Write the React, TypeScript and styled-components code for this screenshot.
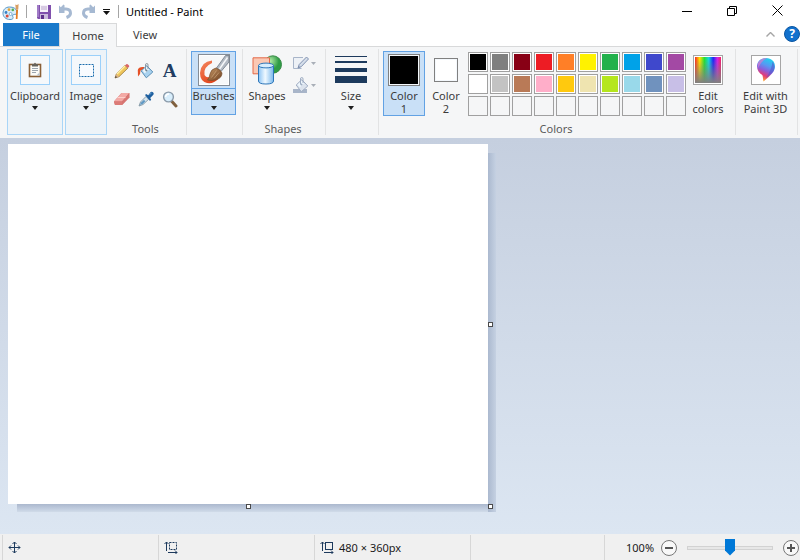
import React, { useState } from "react";
import styled, { createGlobalStyle, css } from "styled-components";

const GlobalStyle = createGlobalStyle`
  * { box-sizing: border-box; }
  body { margin: 0; background: #fff; }
  body, button, input { font-family: "Noto Sans", "Open Sans", sans-serif; font-size: 11px; color: #3b3b3b; }
  button { border: 0; padding: 0; background: none; cursor: default; }
  svg { display: block; flex: none; }
`;

const Window = styled.div`
  display: flex;
  flex-direction: column;
  min-height: 100vh;
  overflow: hidden;
`;

const TitleBar = styled.header`
  display: flex;
  align-items: center;
  height: 23px;
  padding-left: 2px;
`;

const QuickAccess = styled.div`
  display: flex;
  align-items: center;
`;

const Divider = styled.span`
  width: 1px;
  height: 13px;
  margin: 0 9px 0 6px;
  background: #a5a5a5;
`;

const IconButton = styled.button<{ $width: number; $height?: number; $gap?: number }>`
  display: flex;
  align-items: center;
  justify-content: center;
  gap: ${(p) => p.$gap ?? 0}px;
  width: ${(p) => p.$width}px;
  height: ${(p) => p.$height ?? 22}px;
`;

const Title = styled.h1`
  margin: 0 0 0 1px;
  padding-left: 7px;
  border-left: 1px solid #a5a5a5;
  font-size: 11px;
  font-weight: 400;
  line-height: 13px;
  color: #000;
  white-space: nowrap;
`;

const WindowButtons = styled.div`
  display: flex;
  margin-left: auto;
`;

const TabBar = styled.nav`
  display: flex;
  height: 24px;
  padding-left: 3px;
  border-bottom: 1px solid #d8d9da;
`;

const Tab = styled.button<{ $kind: "file" | "active" | "plain" }>`
  width: 56px;
  height: 23px;
  ${(p) => p.$kind === "file" && css`background: #1979ca; color: #fff;`}
  ${(p) => p.$kind === "active" && css`
    width: 58px;
    height: 24px;
    border: 1px solid #d8d9da;
    border-bottom: 0;
    background: #f5f6f7;
  `}
`;

const TabTools = styled.div`
  display: flex;
  align-items: center;
  margin-left: auto;
`;

const Ribbon = styled.section`
  display: flex;
  height: 91px;
  padding: 2px 0 3px 7px;
  background: #f5f6f7;
`;

const Collapsed = styled.div<{ $width: number }>`
  display: flex;
  justify-content: center;
  align-items: flex-start;
  flex: none;
  width: ${(p) => p.$width}px;
  padding-top: 1px;
  margin-right: 2px;
  border: 1px solid #a9d5f7;
  background: #edf3f8;
  &:nth-child(2) { margin-right: 0; }
`;

const GroupFrame = styled.div<{ $width: number }>`
  display: flex;
  flex-direction: column;
  flex: none;
  width: ${(p) => p.$width}px;
  padding: 2px 2px 0 0;
  border-right: 1px solid #e2e3e4;
`;

const GroupBody = styled.div`
  display: flex;
  justify-content: center;
  flex: 1;
  align-items: flex-start;
`;

const GroupLabel = styled.div`
  height: 13px;
  line-height: 13px;
  text-align: center;
  color: #5a5a5a;
`;

const BigButton = styled.button<{ $width: number; $selected?: boolean }>`
  display: flex;
  flex-direction: column;
  align-items: center;
  flex: none;
  width: ${(p) => p.$width}px;
  border: 1px solid ${(p) => (p.$selected ? "#62a2e4" : "transparent")};
  background: ${(p) => (p.$selected ? "#c9e0f7" : "transparent")};
`;

const IconArea = styled.span<{ $split?: boolean }>`
  display: flex;
  align-items: center;
  justify-content: center;
  align-self: stretch;
  height: 37px;
  border-bottom: 1px solid ${(p) => (p.$split ? "#62a2e4" : "transparent")};
`;

const Caption = styled.span`
  display: block;
  line-height: 13px;
  text-align: center;
  white-space: nowrap;
`;

const IconTile = styled.span`
  display: flex;
  align-items: center;
  justify-content: center;
  width: 30px;
  height: 30px;
  border: 1px solid #9bd0fa;
  background: #f5f8fb;
`;

const FramedTile = styled(IconTile)`
  border-color: #a6a6a6;
  background: #fff;
`;

const ArrowSlot = styled.span`
  display: flex;
  align-items: center;
  justify-content: center;
  height: 12px;
  color: #1f1f1f;
`;

const ToolGrid = styled.div`
  display: grid;
  grid-template-columns: repeat(3, 24px);
  padding-top: 6px;
`;

const ShapeOptions = styled.div`
  display: grid;
  padding: 1px 4px 0 0;
`;

const Swatch = styled.span<{ $color: string; $size: number }>`
  width: ${(p) => p.$size}px;
  height: ${(p) => p.$size}px;
  border: 1px solid #808080;
  padding: 1px;
  background: linear-gradient(${(p) => p.$color}, ${(p) => p.$color}) content-box, #f4f8fc;
`;

const Palette = styled.div`
  display: grid;
  grid-template-columns: repeat(10, 20px);
  grid-auto-rows: 20px;
  gap: 2px;
  padding-top: 1px;
  margin: 0 1px;
`;

const PaletteCell = styled.button<{ $color?: string }>`
  border: 1px solid #a0a0a0;
  padding: 1px;
  background: ${(p) => (p.$color ? `linear-gradient(${p.$color}, ${p.$color}) content-box, #fff` : "#f5f6f7")};
`;

const Workspace = styled.main`
  flex: 1;
  padding: 6px 8px 30px;
  background: linear-gradient(#c5cfdf, #dce6f2);
`;

const CanvasHolder = styled.div`
  position: relative;
  width: max-content;
  &::before, &::after { content: ""; position: absolute; }
  &::before {
    left: 100%;
    top: 9px;
    bottom: -8px;
    width: 8px;
    background: linear-gradient(90deg, #abb9cf, #c5d1e2);
  }
  &::after {
    top: 100%;
    left: 9px;
    right: 0;
    height: 8px;
    background: linear-gradient(#abb8ce, #d0dbe9);
  }
`;

const Paper = styled.canvas`
  display: block;
  background: #fff;
`;

const Handle = styled.span<{ $at: "right" | "bottom" | "corner" }>`
  position: absolute;
  z-index: 1;
  width: 5px;
  height: 5px;
  border: 1px solid #4b4b4b;
  background: #fff;
  left: ${(p) => (p.$at === "bottom" ? "calc(50% - 2px)" : "100%")};
  top: ${(p) => (p.$at === "right" ? "calc(50% - 2px)" : "100%")};
`;

const StatusBar = styled.footer`
  display: flex;
  height: 26px;
  padding: 1px 0 0 2px;
  background: #f0f0f0;
  color: #1a1a1a;
`;

const StatusCell = styled.div<{ $grow?: boolean }>`
  display: flex;
  align-items: center;
  gap: 5px;
  flex: ${(p) => (p.$grow ? "1 0 134px" : "none")};
  width: 156px;
  padding-left: 5px;
  border-left: 1px solid #d7d7d7;
  white-space: nowrap;
`;

const ZoomCell = styled.div`
  display: flex;
  align-items: center;
  border-left: 1px solid #d7d7d7;
  padding-left: 21px;
`;

const ZoomValue = styled.output`
  width: 34px;
`;

const ZoomSlider = styled.input`
  appearance: none;
  width: 86px;
  height: 18px;
  margin: 0 9px;
  background: transparent;
  &::-webkit-slider-runnable-track {
    height: 4px;
    border: 1px solid #d2d2d2;
    background: #e7e7e7;
  }
  &::-webkit-slider-thumb {
    appearance: none;
    width: 10px;
    height: 17px;
    margin-top: -8px;
    background: #0078d7;
    clip-path: polygon(0 0, 100% 0, 100% 70%, 50% 100%, 0 70%);
  }
`;

const Arrow = () => (
  <ArrowSlot><svg width="6" height="4" viewBox="0 0 6 4"><path d="M0 0h6L3 4z" fill="currentColor" /></svg></ArrowSlot>
);

const PaletteIcon = () => (
  <svg width="18" height="18" viewBox="0 0 18 18">
    <path d="M7.5 4C3.400 4 1 6.800 1 10.200 1 13.800 3.800 16.500 8 16.500c3 0 3.600-1.400 2.800-2.800-.7-1.400.2-2.300 1.900-2.300 2.200 0 2.800-1.300 2.200-3.100C14.200 5.500 11.300 4 7.500 4z" fill="#d9edfa" stroke="#5795c4" />
    <circle cx="4" cy="9.500" r="1.400" fill="#3b82c4" /><circle cx="7" cy="6.700" r="1.400" fill="#e6a437" />
    <circle cx="10.800" cy="6.900" r="1.300" fill="#54af51" /><circle cx="5.200" cy="13" r="1.500" fill="#dc4a38" />
    <circle cx="8.600" cy="11" r="1.500" fill="#fff" stroke="#5795c4" strokeWidth=".7" />
    <path d="M14.200 6.500 13.800 16h1.700L16 6.500z" fill="#e47b21" /><path d="M13.300 1.500q1.500 1 3.300-.5l-.3 5.500h-2.500z" fill="#d89d61" />
  </svg>
);

const SaveIcon = () => (
  <svg width="14" height="14" viewBox="0 0 14 14">
    <path d="M0 0h14v14H1l-1-1z" fill="#8051ad" /><path d="M3 0h8v7H3z" fill="#f6f2fa" />
    <path d="M4 2h6M4 4h6" stroke="#b8a4cb" /><path d="M3 9h8v5H3z" fill="#cbbcdc" /><path d="M4 10h3v4H4z" fill="#5c318a" /><path d="M0 0h2v12H0z" fill="#a07bc6" />
  </svg>
);

const UndoIcon = ({ flip = false }: { flip?: boolean }) => (
  <svg width="14" height="15" viewBox="0 0 14 15">
    <g transform={flip ? "translate(14 0) scale(-1 1)" : undefined}>
      <path d="M3 5h4q4.500.2 4.500 4.200 0 2.800-4 4.300" fill="none" stroke="#a6b9d2" strokeWidth="3" />
      <path d="M0 1.500 1.800 3.200 4.500.5l1 .8v7.700H0z" fill="#a6b9d2" />
    </g>
  </svg>
);

const ClipboardIcon = () => (
  <svg width="14" height="16" viewBox="0 0 14 16">
    <rect x="1.500" y="2.500" width="11" height="12" fill="#fbfbf8" stroke="#8a5f36" strokeWidth="1.600" />
    <path d="M4 6.500h6M4 8.500h6M4 10.500h4" stroke="#9ba5b0" />
    <path d="M4 4.500V2h2q1-2.600 2 0h2v2.500z" fill="#66625b" /><path d="M11.500 10.500v3h-3z" fill="#b4c0cb" />
  </svg>
);

const SelectIcon = () => (
  <svg width="15" height="13" viewBox="0 0 15 13"><rect x=".5" y=".5" width="14" height="12" fill="#f8fbff" stroke="#1b6cad" strokeDasharray="2 1" /></svg>
);

const PencilIcon = () => (
  <svg width="16" height="16" viewBox="0 0 16 16">
    <path d="m1 15 1.300-4L11 2.400l2.900 2.700L5 13.700z" fill="#efc65c" stroke="#987636" strokeWidth=".8" />
    <path d="m3 11 8-8" stroke="#fff0a7" strokeWidth="1.200" /><path d="m1 15 1.300-4 2.600 2.700z" fill="#d8b28c" /><path d="m1 15 .7-2 1.300 1.200z" fill="#343434" />
    <path d="m11 2.400 1.300-1.200q.7-.5 1.400.1l1.300 1.300q.6.700-.1 1.300l-1 1.200z" fill="#d96668" />
  </svg>
);

const FillIcon = ({ muted = false }: { muted?: boolean }) => (
  <svg width="17" height="17" viewBox="0 0 17 17">
    {muted ? <path d="M1 12h14v4H1z" fill="#a8b5c9" /> : <path d="M7 4Q1.500 3.500.8 7l.2 6.500 2-2.500.5-3.500L7 6z" fill="#e65126" />}
    <path d="m4.200 8 5.600-5.300 6 6.300-6.500 5.800z" fill={muted ? "#dce3ed" : "#a9d2ef"} stroke={muted ? "#9eacc2" : "#5d91b7"} />
    <path d="m5.500 7.600 4.200-3.800 2.400 2.700-4.300 3.800z" fill="#eef7fd" />
    <path d="M8.500 7.500V2q0-1.500 1.300-1.500T11 2v4" fill="none" stroke={muted ? "#9eacc2" : "#8a96a0"} />
    <circle cx="9.500" cy="7.500" r="1" fill={muted ? "#9eacc2" : "#668092"} />
  </svg>
);

const TextIcon = () => (
  <svg width="17" height="17" viewBox="0 0 17 17"><text x="8.500" y="14" textAnchor="middle" fontFamily="Liberation Serif, serif" fontSize="19" fontWeight="700" fill="#203c62">A</text></svg>
);

const EraserIcon = () => (
  <svg width="17" height="16" viewBox="0 0 17 16">
    <path d="M1 10.500 8.500 2h7.800v4.500L9 14H2z" fill="#ce6967" /><path d="M1 10.500 8.500 2h7.800L9 10.500z" fill="#f3aaa6" />
    <path d="m9 10.500 7.300-8.500v4.500L9 14z" fill="#d77572" /><path d="M1 10.500h8V14H2z" fill="#dc7b77" /><path d="m4.500 6.500 8 .1" stroke="#ffd3ce" />
  </svg>
);

const PickerIcon = () => (
  <svg width="16" height="16" viewBox="0 0 16 16">
    <path d="m1 15 1.500-4L8 5.500l2.700 2.700L5 13.500z" fill="#d6e5ef" stroke="#738b9b" strokeWidth=".8" /><path d="m2 14 1-2.600 3-2.600 1.300 1.400L5 12.800z" fill="#5f98c4" />
    <path d="m7 4 1.200-1 2 1.300L12.700 1q1.500-.8 2.700.8.800 1.400-.5 2.500L12.200 7l1 1.700L12 10z" fill="#1e5f9f" /><path d="m11.500 3.600 2-1.600" stroke="#6ba6d7" />
  </svg>
);

const MagnifierIcon = () => (
  <svg width="16" height="17" viewBox="0 0 16 17">
    <path d="m9.500 10 4.500 5" stroke="#80603e" strokeWidth="3" strokeLinecap="round" /><circle cx="6.500" cy="6" r="4.900" fill="#d8eefc" stroke="#8b9baa" strokeWidth="1.400" />
    <path d="M3.500 6Q4 3 7 3" fill="none" stroke="#fff" strokeWidth="1.500" />
  </svg>
);

const BrushIcon = () => (
  <svg width="32" height="32" viewBox="0 0 32 32">
    <defs>
      <linearGradient id="bristle" x2="1" y2="1"><stop stopColor="#c89a68" /><stop offset="1" stopColor="#6e4020" /></linearGradient>
      <linearGradient id="paint" x2=".6" y2="1"><stop stopColor="#f58a62" /><stop offset="1" stopColor="#e2451c" /></linearGradient>
    </defs>
    <rect x=".5" y=".5" width="31" height="31" fill="#fff" stroke="#858d97" /><path d="M2 2h28v28H2z" fill="#f7f8f9" />
    <path d="M14 6.500Q3 7.500 2 19q0 8 7 10 7 1 11-4l-7-3q-4 3-6.500-1-1.500-8 7.500-12z" fill="url(#paint)" />
    <path d="m18.500 14 9-12.500H31V8l-8 9.500z" fill="#b3bac3" stroke="#6f7984" strokeWidth=".8" /><path d="m21.500 15 8-11.500" stroke="#f5f7f9" strokeWidth="1.500" />
    <path d="M9.500 26q2-2 2.500-6 1-5 6-6 4.500 1.500 6 5 0 4.500-5 6.500-5 1.800-9.500.5z" fill="url(#bristle)" stroke="#794e2d" strokeWidth=".7" /><path d="m13.500 23.500 5-7m-2.500 8 5-6" stroke="#d6b084" strokeWidth=".6" />
  </svg>
);

const ShapesIcon = () => (
  <svg width="30" height="30" viewBox="0 0 30 30">
    <defs>
      <radialGradient id="ball" cx=".35" cy=".3"><stop stopColor="#b4eba8" /><stop offset="1" stopColor="#2e9c45" /></radialGradient>
      <linearGradient id="tube"><stop stopColor="#8dc4f4" /><stop offset=".45" stopColor="#f0f9ff" /><stop offset="1" stopColor="#7ab8ec" /></linearGradient>
    </defs>
    <circle cx="20.800" cy="9.500" r="8.700" fill="url(#ball)" stroke="#398a48" />
    <path d="M1 2.800h16.500v16H1z" fill="#fac8b4" stroke="#e46a48" />
    <path d="M6.500 10.500v15.500q0 3 7.500 3t7.500-3V10.500z" fill="url(#tube)" stroke="#2d76b9" /><ellipse cx="14" cy="10.500" rx="7.500" ry="2.400" fill="#d6ecfd" stroke="#2d76b9" />
  </svg>
);

const OutlineIcon = () => (
  <svg width="16" height="14" viewBox="0 0 16 14">
    <path d="M10 1.500H.5v11h8" fill="#edf1f6" stroke="#a8b5c9" /><path d="m5 12 1.200-3.500L13.500 1l2 2-7.300 7.700z" fill="#d5deea" stroke="#8192b1" /><path d="m5 12 .8-2 1.200 1z" fill="#7b8cab" />
  </svg>
);

const SmallArrow = () => <svg width="5" height="3" viewBox="0 0 5 3"><path d="M0 0h5L2.500 3z" fill="#a9afb8" /></svg>;

const SizeIcon = () => (
  <svg width="32" height="28" viewBox="0 0 32 28"><path d="M0 0h32v1H0zM0 5h32v2H0zM0 12h32v4H0zM0 20h32v7H0z" fill="#1d3a5d" /></svg>
);

const SpectrumIcon = () => (
  <svg width="26" height="26" viewBox="0 0 26 26">
    <defs>
      <linearGradient id="hue"><stop stopColor="#f42a28" /><stop offset=".18" stopColor="#ffe400" /><stop offset=".36" stopColor="#24dd35" /><stop offset=".53" stopColor="#13d6e2" /><stop offset=".7" stopColor="#1d26f5" /><stop offset=".86" stopColor="#d323e2" /><stop offset="1" stopColor="#f12262" /></linearGradient>
      <linearGradient id="grey" x2="0" y2="1"><stop offset=".1" stopColor="#808080" stopOpacity="0" /><stop offset="1" stopColor="#808080" /></linearGradient>
    </defs>
    <path d="M0 0h26v26H0z" fill="url(#hue)" /><path d="M0 0h26v26H0z" fill="url(#grey)" />
  </svg>
);

const Paint3DIcon = () => (
  <svg width="18" height="24" viewBox="0 0 18 24">
    <defs>
      <linearGradient id="drop" x1=".6" x2=".25" y2="1"><stop stopColor="#20d0ed" /><stop offset=".3" stopColor="#5898f3" /><stop offset=".52" stopColor="#8c5dda" /><stop offset=".72" stopColor="#e43b78" /><stop offset="1" stopColor="#ffc020" /></linearGradient>
    </defs>
    <path d="M9 0C3.500 0 0 3.600 0 8.300c0 4 2.300 7 5.300 8.700.8 2 .6 4 1.200 6.500Q12 19 15 15.500c2-2.100 3-4.500 3-7.200C18 3.600 14.500 0 9 0z" fill="url(#drop)" />
    <path d="M1 5Q4-.5 10 .2 4 3 1 10z" fill="#d979cf" opacity=".7" /><path d="M15.500 3.500Q20 10 14.500 15.500L9 20q6-9 6.500-16.500z" fill="#5258c9" opacity=".6" />
  </svg>
);

const MoveIcon = () => (
  <svg width="13" height="13" viewBox="0 0 13 13"><path d="M6.500 1v11M1 6.500h11M4.500 3l2-2 2 2M4.500 10l2 2 2-2M3 4.500l-2 2 2 2M10 4.500l2 2-2 2" fill="none" stroke="#1d3a5d" /></svg>
);

const BoundsIcon = ({ dashed = false }: { dashed?: boolean }) => (
  <svg width="14" height="13" viewBox="0 0 14 13">
    <path d="M2.500 10V1M.5 3l2-2 2 2M4 11.500h9m-2-2 2 2-2 2" fill="none" stroke="#1d3a5d" /><rect x="5.500" y="1.500" width="7" height="7" fill="none" stroke="#1d3a5d" strokeDasharray={dashed ? "2 1" : undefined} />
  </svg>
);

const ZoomIcon = ({ plus = false }: { plus?: boolean }) => (
  <svg width="16" height="16" viewBox="0 0 16 16"><circle cx="8" cy="8" r="7.500" fill="#f8f8f8" stroke="#777" /><path d={plus ? "M4 8h8M8 4v8" : "M4 8h8"} stroke="#555" strokeWidth="2" /></svg>
);

const COLORS = [
  ["Black", "#000000"], ["Gray 50%", "#7f7f7f"], ["Dark red", "#880015"], ["Red", "#ed1c24"], ["Orange", "#ff7f27"],
  ["Yellow", "#fff200"], ["Green", "#22b14c"], ["Turquoise", "#00a2e8"], ["Indigo", "#3f48cc"], ["Purple", "#a349a4"],
  ["White", "#ffffff"], ["Gray 25%", "#c3c3c3"], ["Brown", "#b97a57"], ["Rose", "#ffaec9"], ["Gold", "#ffc90e"],
  ["Light yellow", "#efe4b0"], ["Lime", "#b5e61d"], ["Light turquoise", "#99d9ea"], ["Blue-gray", "#7092be"], ["Lavender", "#c8bfe7"],
];

const TOOLS = [
  ["Pencil", PencilIcon], ["Fill with color", FillIcon], ["Text", TextIcon],
  ["Eraser", EraserIcon], ["Color picker", PickerIcon], ["Magnifier", MagnifierIcon],
] as const;

function Group({ width, label, children }: { width: number; label?: string; children: React.ReactNode }) {
  return (
    <GroupFrame $width={width}>
      <GroupBody>{children}</GroupBody>
      {label && <GroupLabel>{label}</GroupLabel>}
    </GroupFrame>
  );
}

export default function App() {
  const [zoom, setZoom] = useState(100);
  const [active, setActive] = useState(0);
  const [colors, setColors] = useState(["#000", "#fff"]);
  const pick = (value: string) => setColors(colors.map((c, i) => (i === active ? value : c)));

  return (
    <Window>
      <GlobalStyle />
      <TitleBar>
        <QuickAccess>
          <PaletteIcon />
          <Divider />
          <IconButton $width={16} aria-label="Save"><SaveIcon /></IconButton>
          <IconButton $width={28} aria-label="Undo"><UndoIcon /></IconButton>
          <IconButton $width={16} aria-label="Redo"><UndoIcon flip /></IconButton>
          <IconButton $width={21} aria-label="Customize Quick Access Toolbar">
            <svg width="7" height="6" viewBox="0 0 7 6"><path d="M0 0h7v1H0zM0 2h7L3.500 6z" fill="#111" /></svg>
          </IconButton>
        </QuickAccess>
        <Title>Untitled - Paint</Title>
        <WindowButtons>
          <IconButton $width={45} aria-label="Minimize"><svg width="10" height="10" viewBox="0 0 10 10"><path d="M0 4h10v1H0z" /></svg></IconButton>
          <IconButton $width={46} aria-label="Restore"><svg width="10" height="12" viewBox="0 0 10 12"><path d="M.5 2.500h7v7h-7zM2.500 2.500v-2h7v7h-2" fill="none" stroke="#000" /></svg></IconButton>
          <IconButton $width={45} aria-label="Close"><svg width="11" height="13" viewBox="0 0 11 13"><path d="m.5.5 10 10m0-10-10 10" stroke="#000" /></svg></IconButton>
        </WindowButtons>
      </TitleBar>

      <TabBar>
        <Tab $kind="file">File</Tab>
        <Tab $kind="active">Home</Tab>
        <Tab $kind="plain">View</Tab>
        <TabTools>
          <IconButton $width={28} aria-label="Minimize the Ribbon"><svg width="9" height="5" viewBox="0 0 9 5"><path d="m.5 4.500 4-4 4 4" fill="none" stroke="#a5a5a5" strokeWidth="1.400" /></svg></IconButton>
          <IconButton $width={16} aria-label="Help">
            <svg width="16" height="18" viewBox="0 0 16 18"><circle cx="8" cy="8" r="7.500" fill="#1271cd" stroke="#0b56a2" /><text x="8" y="12" textAnchor="middle" fontSize="12" fontWeight="700" fill="#fff">?</text></svg>
          </IconButton>
        </TabTools>
      </TabBar>

      <Ribbon>
        <Collapsed $width={56}>
          <BigButton $width={54}><IconArea><IconTile><ClipboardIcon /></IconTile></IconArea><Caption>Clipboard</Caption><Arrow /></BigButton>
        </Collapsed>
        <Collapsed $width={42}>
          <BigButton $width={40}><IconArea><IconTile><SelectIcon /></IconTile></IconArea><Caption>Image</Caption><Arrow /></BigButton>
        </Collapsed>
        <Group width={80} label="Tools">
          <ToolGrid>
            {TOOLS.map(([name, Icon]) => <IconButton key={name} $width={24} $height={28} aria-label={name}><Icon /></IconButton>)}
          </ToolGrid>
        </Group>
        <Group width={56}>
          <BigButton $width={45} $selected><IconArea $split><BrushIcon /></IconArea><Caption>Brushes</Caption><Arrow /></BigButton>
        </Group>
        <Group width={83} label="Shapes">
          <BigButton $width={46}><IconArea><ShapesIcon /></IconArea><Caption>Shapes</Caption><Arrow /></BigButton>
          <ShapeOptions>
            <IconButton $width={28} $gap={2} aria-label="Outline"><OutlineIcon /><SmallArrow /></IconButton>
            <IconButton $width={28} $gap={2} aria-label="Fill"><FillIcon muted /><SmallArrow /></IconButton>
          </ShapeOptions>
        </Group>
        <Group width={53}>
          <BigButton $width={44}><IconArea><SizeIcon /></IconArea><Caption>Size</Caption><Arrow /></BigButton>
        </Group>
        <Group width={357} label="Colors">
          {colors.map((color, i) => (
            <BigButton key={i} $width={42} $selected={active === i} aria-pressed={active === i} onClick={() => setActive(i)}>
              <IconArea><Swatch $color={color} $size={i ? 24 : 32} /></IconArea>
              <Caption>Color<br />{i + 1}</Caption>
            </BigButton>
          ))}
          <Palette>
            {Array.from({ length: 30 }, (_, i) => {
              const [name, value] = COLORS[i] ?? [`Custom color ${i - 19}`, undefined];
              return <PaletteCell key={i} $color={value} aria-label={name} onClick={() => value && pick(value)} />;
            })}
          </Palette>
          <BigButton $width={42}><IconArea><FramedTile><SpectrumIcon /></FramedTile></IconArea><Caption>Edit<br />colors</Caption></BigButton>
        </Group>
        <Group width={62}>
          <BigButton $width={56}><IconArea><FramedTile><Paint3DIcon /></FramedTile></IconArea><Caption>Edit with<br />Paint 3D</Caption></BigButton>
        </Group>
      </Ribbon>

      <Workspace>
        <CanvasHolder>
          <Paper width={480} height={360} aria-label="Drawing canvas" />
          <Handle $at="right" /><Handle $at="bottom" /><Handle $at="corner" />
        </CanvasHolder>
      </Workspace>

      <StatusBar>
        <StatusCell><MoveIcon /></StatusCell>
        <StatusCell><BoundsIcon dashed /></StatusCell>
        <StatusCell><BoundsIcon />480 × 360px</StatusCell>
        <StatusCell $grow />
        <ZoomCell>
          <ZoomValue>{zoom}%</ZoomValue>
          <IconButton $width={18} aria-label="Zoom out" onClick={() => setZoom(Math.max(10, zoom - 10))}><ZoomIcon /></IconButton>
          <ZoomSlider type="range" aria-label="Zoom" min={10} max={190} value={zoom} onChange={(e) => setZoom(Number(e.target.value))} />
          <IconButton $width={18} aria-label="Zoom in" onClick={() => setZoom(Math.min(190, zoom + 10))}><ZoomIcon plus /></IconButton>
        </ZoomCell>
      </StatusBar>
    </Window>
  );
}
